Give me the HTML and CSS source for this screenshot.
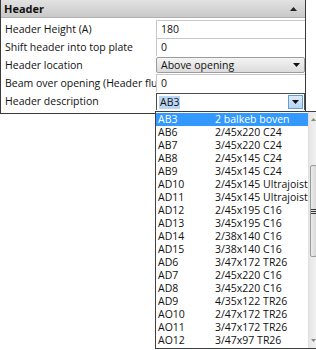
FILE: index.html
```html
<!DOCTYPE html>
<html lang="en">
<head>
  <meta charset="UTF-8" />
  <title>Header properties</title>
  <link rel="stylesheet" href="styles.css">
</head>
<body>
  <div class="panel">
    <div class="panel-head">
      <span>Header</span>
      <svg class="collapse" width="7" height="4" viewBox="0 0 7 4"><polygon points="0,4 7,4 3.5,0" fill="#222"/></svg>
    </div>
    <div class="props">
      <div class="prop-label">Header Height (A)</div>
      <div class="prop-value"><div class="text-field">180</div></div>

      <div class="prop-label">Shift header into top plate</div>
      <div class="prop-value"><div class="text-field">0</div></div>

      <div class="prop-label">Header location</div>
      <div class="prop-value">
        <div class="combo">
          <span>Above opening</span>
          <svg width="7" height="4" viewBox="0 0 7 4"><polygon points="0,0 7,0 3.5,4" fill="#111"/></svg>
        </div>
      </div>

      <div class="prop-label">Beam over opening (Header flush to top)</div>
      <div class="prop-value"><div class="text-field">0</div></div>

      <div class="prop-label">Header description</div>
      <div class="prop-value">
        <div class="combo-edit">
          <span class="combo-text"><span class="sel">AB3</span></span>
          <span class="combo-btn">
            <svg width="7" height="4" viewBox="0 0 7 4"><polygon points="0,0 7,0 3.5,4" fill="#111"/></svg>
          </span>
        </div>
      </div>
    </div>
  </div>

  <!-- open drop-down of "Header description" -->
  <div class="popup">
    <div class="popup-items">
      <div class="item selected"><span class="code">AB3</span><span>2 balkeb boven</span></div>
      <div class="item"><span class="code">AB6</span><span>2/45x220 C24</span></div>
      <div class="item"><span class="code">AB7</span><span>3/45x220 C24</span></div>
      <div class="item"><span class="code">AB8</span><span>2/45x145 C24</span></div>
      <div class="item"><span class="code">AB9</span><span>3/45x145 C24</span></div>
      <div class="item"><span class="code">AD10</span><span>2/45x145 Ultrajoist</span></div>
      <div class="item"><span class="code">AD11</span><span>3/45x145 Ultrajoist</span></div>
      <div class="item"><span class="code">AD12</span><span>2/45x195 C16</span></div>
      <div class="item"><span class="code">AD13</span><span>3/45x195 C16</span></div>
      <div class="item"><span class="code">AD14</span><span>2/38x140 C16</span></div>
      <div class="item"><span class="code">AD15</span><span>3/38x140 C16</span></div>
      <div class="item"><span class="code">AD6</span><span>3/47x172 TR26</span></div>
      <div class="item"><span class="code">AD7</span><span>2/45x220 C16</span></div>
      <div class="item"><span class="code">AD8</span><span>3/45x220 C16</span></div>
      <div class="item"><span class="code">AD9</span><span>4/35x122 TR26</span></div>
      <div class="item"><span class="code">AO10</span><span>2/47x172 TR26</span></div>
      <div class="item"><span class="code">AO11</span><span>3/47x172 TR26</span></div>
      <div class="item"><span class="code">AO12</span><span>3/47x97 TR26</span></div>
    </div>
    <div class="scrollbar">
      <svg class="sb-arrow" width="5" height="3" viewBox="0 0 5 3"><polygon points="0,3 5,3 2.5,0" fill="#888"/></svg>
      <div class="sb-track">
        <div class="sb-thumb"><span class="grip"></span></div>
      </div>
      <svg class="sb-arrow" width="5" height="3" viewBox="0 0 5 3"><polygon points="0,0 5,0 2.5,3" fill="#888"/></svg>
    </div>
  </div>
</body>
</html>
```

FILE: styles.css
```css
html, body {
  margin: 0;
  padding: 0;
  background-color: #fff;
  color: #111;
  font-family: "Open Sans", "Noto Sans", Arial, sans-serif;
  font-size: 10.5px;
}

.panel {
  width: 304px;
  border-left: 1px solid #3a3a3a;
  border-right: 1px solid #3a3a3a;
  border-bottom: 1px solid #3a3a3a;
  padding-bottom: 3px;
}

.panel-head {
  height: 17px;
  display: flex;
  align-items: center;
  justify-content: space-between;
  padding: 0 8px 0 3px;
  background: linear-gradient(#e2e2e2, #c9c9c9);
  border-bottom: 1px solid #b0b0b0;
  font-weight: bold;
  font-size: 11px;
}

.props {
  margin-top: 2px;
  display: grid;
  grid-template-columns: 155px 1fr;
  grid-auto-rows: 18px;
}

.prop-label {
  padding-left: 4px;
  line-height: 18px;
  white-space: nowrap;
  overflow: hidden;
}

.prop-value {
  display: flex;
}

.text-field {
  flex: 1;
  border-left: 1px solid #c8c8c8;
  border-top: 1px solid #c8c8c8;
  padding-left: 4px;
  line-height: 17px;
}

.combo {
  flex: 1;
  margin: 1px 0 1px 0;
  display: flex;
  align-items: center;
  justify-content: space-between;
  padding: 0 4px 0 4px;
  border: 1px solid #9c9c9c;
  border-radius: 2px;
  background: linear-gradient(#f4f4f4, #dcdcdc);
}

.combo-edit {
  flex: 1;
  margin-top: 1px;
  display: flex;
  border: 1px solid #4d4d4d;
  border-bottom: none;
  background: #fff;
}

.combo-text {
  flex: 1;
  padding-left: 2px;
  display: flex;
  align-items: center;
}

.sel {
  background: #b9d7f4;
  padding: 0 1px;
  line-height: 13px;
}

.combo-btn {
  width: 13px;
  margin: 1px;
  display: flex;
  align-items: center;
  justify-content: center;
  border: 1px solid #5f9ed6;
  background: linear-gradient(#dcecfa, #b6d5f0);
}

.popup {
  position: absolute;
  left: 155px;
  top: 111px;
  width: 159px;
  height: 236px;
  display: flex;
  border: 1px solid #404040;
  background: #fff;
}

.popup-items {
  flex: 1;
  padding-top: 1px;
}

.item {
  display: flex;
  height: 13px;
  line-height: 13px;
  padding-left: 2px;
  white-space: nowrap;
}

.item .code {
  width: 57px;
}

.item.selected {
  background: #3399ff;
  color: #fff;
}

.scrollbar {
  width: 15px;
  display: flex;
  flex-direction: column;
  align-items: center;
  background: linear-gradient(90deg, #e6e6e6, #f4f4f4);
  border-left: 1px solid #e0e0e0;
}

.sb-arrow {
  margin: 6px 0;
}

.sb-track {
  flex: 1;
  width: 100%;
  padding-top: 38px;
}

.sb-thumb {
  height: 90px;
  margin: 0 1px;
  border: 1px solid #9a9a9a;
  border-radius: 2px;
  background: linear-gradient(90deg, #ececec, #d6d6d6);
  display: flex;
  align-items: center;
  justify-content: center;
}

.grip {
  width: 5px;
  height: 5px;
  background: repeating-linear-gradient(#333 0 1px, transparent 1px 2px);
}
```
